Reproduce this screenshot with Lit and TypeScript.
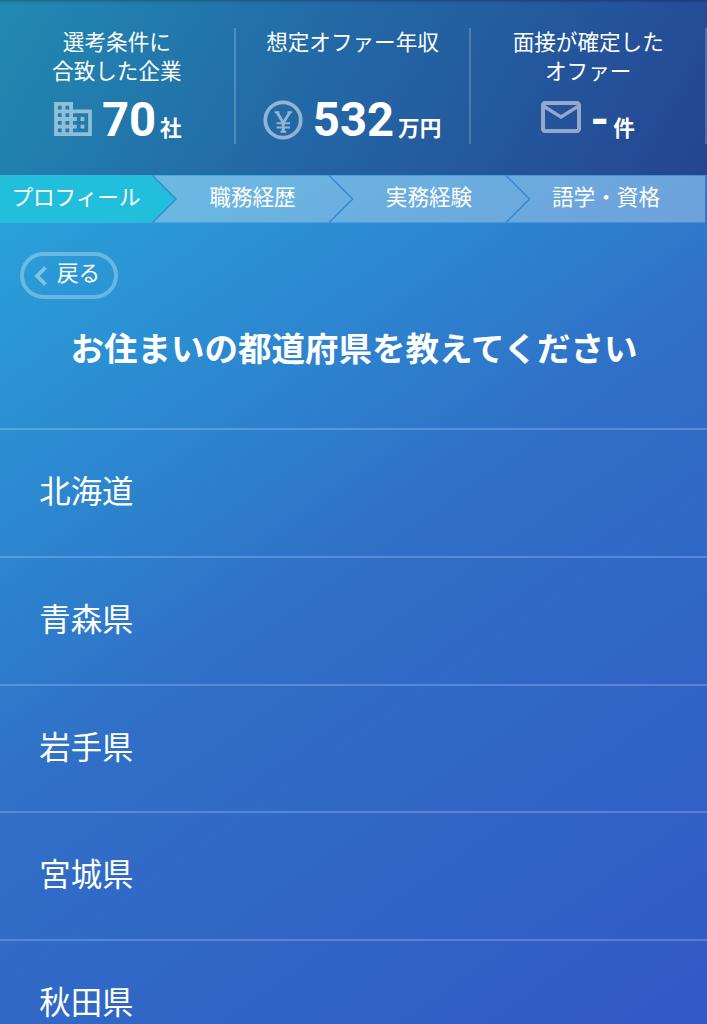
import {html, css, svg, LitElement} from 'lit';
import {customElement} from 'lit/decorators.js';

const ICONS = {
  building: svg`<svg class="building" viewBox="2 3 20 18">
    <path d="M12 7V3H2v18h20V7H12zM6 19H4v-2h2v2zm0-4H4v-2h2v2zm0-4H4V9h2v2zm0-4H4V5h2v2zm4 12H8v-2h2v2zm0-4H8v-2h2v2zm0-4H8V9h2v2zm0-4H8V5h2v2zm10 12h-8v-2h2v-2h-2v-2h2v-2h-2V9h8v10zm-2-8h-2v2h2v-2zm0 4h-2v2h2v-2z" />
  </svg>`,
  yen: svg`<svg class="yen" viewBox="0 0 40 40">
    <circle class="line" cx="20" cy="20" r="17.7" />
    <path class="thin" d="M11.6 12.3h4.8M24.4 12.3h4.8M13.6 23.3h13.4M13.6 27.6h13.4M17.4 31.8h5.8" />
    <path class="thick" d="M13.9 12.3l6.4 10.4 6.6-10.4M20.3 21.5v11" />
  </svg>`,
  mail: svg`<svg class="mail" viewBox="2 4 20 16">
    <path d="M22 6c0-1.1-.9-2-2-2H4c-1.1 0-2 .9-2 2v12c0 1.1.9 2 2 2h16c1.1 0 2-.9 2-2V6zm-2 0l-8 5-8-5h16zm0 12H4V8l8 5 8-5v10z" />
  </svg>`,
};

@customElement('app-root')
class AppRoot extends LitElement {
  static styles = css`
    :host {
      display: block;
      height: 1024px;
      overflow: hidden;
      color: #fff;
      font-family: Roboto, 'Noto Sans CJK JP', sans-serif;
      background: linear-gradient(145deg, #29abdc 6%, #2b8fd3 29%, #306fc7 54%, #325ac6 97%);
    }

    .summary {
      display: flex;
      box-sizing: border-box;
      height: 175px;
      padding-top: 28px;
      background: linear-gradient(120deg, #218ab2, #2368a6 45%, #254592);
      box-shadow: inset 0 4px 3px -3px rgba(0, 0, 0, 0.3);
    }

    .stat {
      flex: 0 0 235.7px;
      box-sizing: border-box;
      height: 116px;
      border-right: 2px solid rgba(255, 255, 255, 0.2);
      display: flex;
      flex-direction: column;
      align-items: center;
    }

    .label {
      flex: none;
      height: 60px;
      font-size: 21.6px;
      line-height: 29px;
      text-align: center;
      white-space: pre-line;
    }

    .figure {
      display: flex;
      align-items: flex-start;
      padding-right: 1px;
      font-weight: bold;
      white-space: nowrap;
    }

    .value {
      margin-left: 10px;
      font-size: 47.2px;
      line-height: 64px;
    }

    .unit {
      margin: 25px 0 0 4px;
      font-size: 21.6px;
      line-height: 32px;
    }

    svg {
      display: block;
      fill: rgba(255, 255, 255, 0.5);
    }

    .building {
      width: 38px;
      height: 34px;
      margin: 14px 0 0 3px;
    }

    .yen {
      width: 40px;
      height: 40px;
      margin-top: 12px;
      opacity: 0.5;
    }

    .mail {
      width: 40px;
      height: 32px;
      margin-top: 12.5px;
    }

    .line,
    .thin,
    .thick {
      fill: none;
      stroke: #fff;
      stroke-width: 3.8;
    }

    .thin {
      stroke-width: 2;
    }

    .thick {
      stroke-width: 2.9;
    }

    .steps {
      display: block;
      width: 707px;
      height: 48px;
    }

    .step {
      fill: rgba(255, 255, 255, 0.3);
    }

    .step.active {
      fill: #22bfdd;
    }

    .divider {
      fill: none;
      stroke: #3488d0;
      stroke-width: 1.4;
    }

    .step-name {
      fill: #fff;
      font-size: 21.6px;
      text-anchor: middle;
    }

    .back {
      display: flex;
      align-items: center;
      box-sizing: border-box;
      width: 98px;
      height: 47px;
      margin: 29px 0 0 20px;
      padding: 0 0 0 10px;
      border: 4px solid rgba(255, 255, 255, 0.3);
      border-radius: 24px;
      background: none;
      color: #fff;
      font: inherit;
      font-size: 21.6px;
      line-height: 32px;
    }

    .back span {
      margin: -3px 0 0 10px;
    }

    .chevron {
      width: 13px;
      height: 20px;
      opacity: 0.4;
    }

    .title {
      margin: 26px 0 0;
      height: 103.4px;
      padding-left: 1px;
      font-size: 33.5px;
      line-height: 50px;
      font-weight: bold;
      text-align: center;
    }

    .list {
      margin: 0;
      padding: 0;
      list-style: none;
    }

    .item {
      box-sizing: border-box;
      height: 127.6px;
      padding-left: 39.3px;
      border-top: 2px solid rgba(255, 255, 255, 0.2);
      font-size: 31.4px;
      line-height: 126px;
    }
  `;

  stats = [
    {label: '選考条件に\n合致した企業', icon: ICONS.building, value: '70', unit: '社'},
    {label: '想定オファー年収', icon: ICONS.yen, value: '532', unit: '万円'},
    {label: '面接が確定した\nオファー', icon: ICONS.mail, value: '-', unit: '件'},
  ];

  steps = [
    {name: 'プロフィール', x: 76},
    {name: '職務経歴', x: 252.5},
    {name: '実務経験', x: 429},
    {name: '語学・資格', x: 606},
  ];

  prefectures = ['北海道', '青森県', '岩手県', '宮城県', '秋田県'];

  renderSteps() {
    return html`
      <svg class="steps" viewBox="0 0 707 48">
        <rect class="step" x="0" y="0.5" width="705" height="47" />
        <path class="step active" d="M0 .5h152.5L176 24 152.5 47.5H0z" />
        ${[152.5, 329.2, 506].map(
          (x) => svg`<path class="divider" d="M${x} .5l23.5 23.5-23.5 23.5" />`
        )}
        ${this.steps.map(
          (step) => svg`<text class="step-name" x=${step.x} y="29.5">${step.name}</text>`
        )}
      </svg>
    `;
  }

  render() {
    return html`
      <header class="summary">
        ${this.stats.map(
          (stat) => html`
            <div class="stat">
              <div class="label">${stat.label}</div>
              <div class="figure">
                ${stat.icon}
                <span class="value">${stat.value}</span>
                <span class="unit">${stat.unit}</span>
              </div>
            </div>
          `
        )}
      </header>
      ${this.renderSteps()}
      <button class="back">
        <svg class="chevron" viewBox="0 0 13 20">
          <path class="line" d="M11.5 1.5L3 10l8.5 8.5" />
        </svg>
        <span>戻る</span>
      </button>
      <h1 class="title">お住まいの都道府県を教えてください</h1>
      <ul class="list">
        ${this.prefectures.map((name) => html`<li class="item">${name}</li>`)}
      </ul>
    `;
  }
}
